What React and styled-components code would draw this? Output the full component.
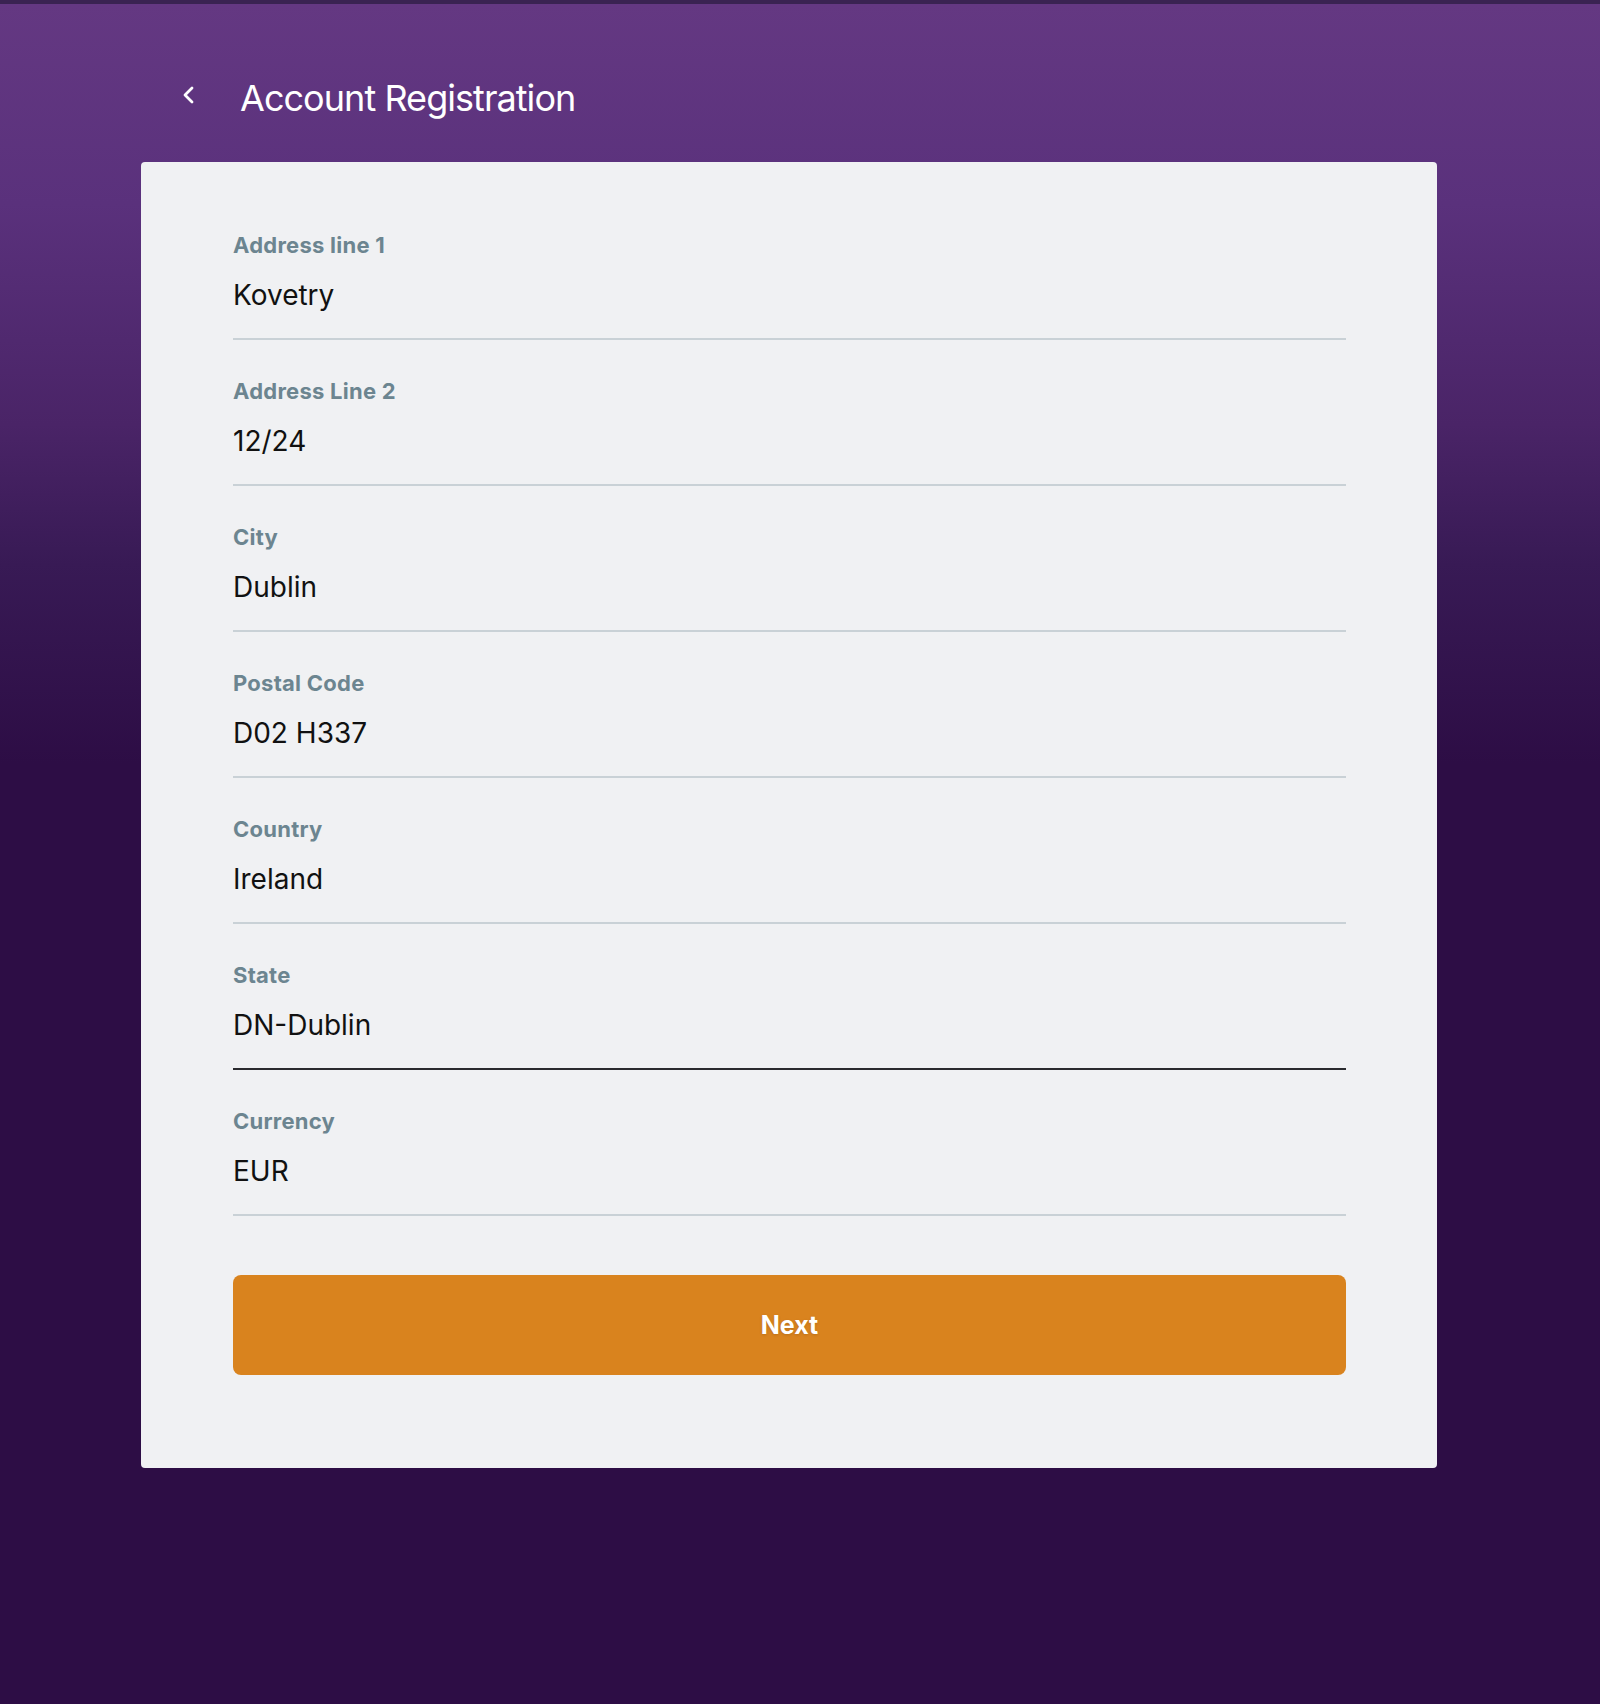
import React from 'react'
import styled, { createGlobalStyle } from 'styled-components'

const fields = [
  { label: 'Address line 1', value: 'Kovetry' },
  { label: 'Address Line 2', value: '12/24' },
  { label: 'City', value: 'Dublin' },
  { label: 'Postal Code', value: 'D02 H337' },
  { label: 'Country', value: 'Ireland' },
  { label: 'State', value: 'DN-Dublin', active: true },
  { label: 'Currency', value: 'EUR' },
]

export default () => (
  <Page>
    <GlobalStyle />
    <Header>
      <BackButton aria-label="back">
        <svg width="16" height="20" viewBox="0 0 16 20" fill="none">
          <polyline points="11,3 4,10 11,17" stroke="#fff" strokeWidth="2.8" strokeLinecap="round" strokeLinejoin="round" />
        </svg>
      </BackButton>
      <Title>Account Registration</Title>
    </Header>
    <Card>
      {fields.map(f => (
        <Field key={f.label} active={f.active}>
          <Label>{f.label}</Label>
          <Value>{f.value}</Value>
        </Field>
      ))}
      <NextButton>Next</NextButton>
    </Card>
  </Page>
)

const GlobalStyle = createGlobalStyle`
  html, body {
    margin: 0;
    padding: 0;
  }
  body {
    font-family: Inter, "Liberation Sans", sans-serif;
    background: #2d0d45;
  }
`
const Page = styled.div`
  min-height: 1704px;
  box-sizing: border-box;
  border-top: 4px solid #3a2352;
  background: linear-gradient(180deg, #643882 0px, #5a317c 200px, #4a2467 420px, #381a55 560px, #2d0d45 760px, #2d0d45 100%);
  overflow: hidden;
`
const Header = styled.div`
  display: flex;
  align-items: center;
  height: 44px;
  padding: 72px 0 42px 181px;
`
const BackButton = styled.div`
  display: flex;
  width: 16px;
  height: 20px;
  margin-right: 43px;
  margin-top: -6px;
`
const Title = styled.h1`
  margin: 0;
  font-size: 36px;
  line-height: 44px;
  font-weight: 400;
  color: #fff;
  letter-spacing: -0.95px;
`
const Card = styled.div`
  margin-left: 141px;
  width: 1296px;
  box-sizing: border-box;
  padding: 32px 91px 93px 92px;
  background: #f0f1f3;
  border-radius: 4px;
`
const Field = styled.div`
  padding: 38px 0 25px;
  border-bottom: 2px solid ${p => (p.active ? '#2a2a2e' : '#c9d1d6')};
`
const Label = styled.div`
  font-size: 22px;
  line-height: 26px;
  font-weight: 700;
  color: #6c8590;
  margin-bottom: 19px;
  letter-spacing: 0.25px;
`
const Value = styled.div`
  font-size: 28px;
  line-height: 36px;
  color: #111;
`
const NextButton = styled.div`
  margin-top: 59px;
  height: 100px;
  display: flex;
  align-items: center;
  justify-content: center;
  background: #d9831e;
  border-radius: 8px;
  color: #fff;
  font-size: 25px;
  font-weight: 700;
  text-shadow: 0 1px 3px rgba(0, 0, 0, 0.15);
`
